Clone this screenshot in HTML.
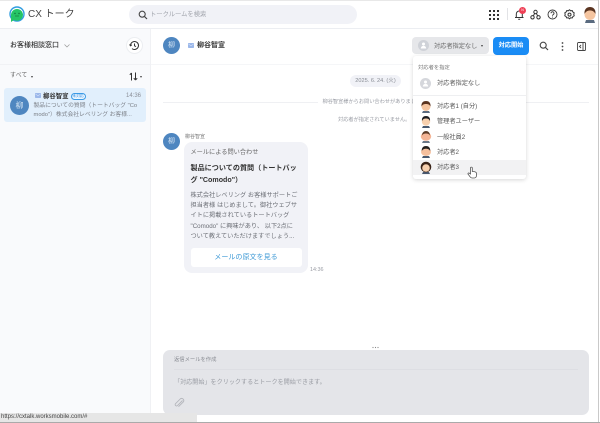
<!DOCTYPE html>
<html lang="ja"><head><meta charset="utf-8"><style>
*{box-sizing:border-box}
html,body{margin:0;padding:0;background:#fff}
body{width:600px;height:423px;overflow:hidden;position:relative;font-family:"Liberation Sans","Noto Sans CJK JP",sans-serif;color:#333}
#r{position:absolute;left:0;top:0;width:600px;height:423px;filter:blur(.35px);overflow:hidden}
.a{position:absolute;white-space:nowrap}
.av{position:absolute;border-radius:50%;background:#4e86c0;color:#cfe0f0;text-align:center}
svg{position:absolute;overflow:visible}
</style></head><body><div id="r">
<div class="a" style="left:0;top:0;width:600px;height:1px;background:#e8e8e8"></div>
<div class="a" style="left:0;top:28px;width:598px;height:1px;background:#eceef2"></div>
<div class="a" style="left:0;top:29px;width:151px;height:394px;background:#f9fafc"></div>
<div class="a" style="left:150px;top:29px;width:1px;height:394px;background:#f0f1f4"></div>
<div class="a" style="left:0;top:64px;width:150px;height:1px;background:#f1f2f5"></div>
<div class="a" style="left:151px;top:64px;width:447px;height:1px;background:#f5f6f8"></div>

<svg style="left:9px;top:7px" width="16" height="16" viewBox="0 0 16 16"><circle cx="8" cy="7" r="7" fill="none" stroke="#2f9ce0" stroke-width="1.4"/><path d="M2 8a6 6 0 1 1 12 0a6 6 0 0 1-9 5l-3 2z" fill="#25c566"/><circle cx="6" cy="6.5" r=".7" fill="#11703a"/><circle cx="10" cy="6.5" r=".7" fill="#11703a"/><path d="M6 9h4" stroke="#11703a" stroke-width=".6"/></svg>
<div class="a" style="left:28px;top:6.500px;font-size:10px;line-height:16px;color:#444">CX トーク</div>

<div class="a" style="left:129px;top:5px;width:228px;height:19px;border-radius:10px;background:#f1f2f7"></div>
<svg style="left:138px;top:10px" width="10" height="10" viewBox="0 0 10 10"><circle cx="4.2" cy="4.2" r="3" fill="none" stroke="#444" stroke-width="1.1"/><path d="M6.5 6.5L9 9" stroke="#444" stroke-width="1.2"/></svg>
<div class="a" style="left:150px;top:9px;font-size:6.300px;line-height:11px;color:#a2a5ad">トークルームを検索</div>

<svg style="left:489px;top:9px" width="11" height="11" viewBox="0 0 11 11" fill="#333"><rect x="0" y="1" width="2" height="2"/><rect x="4" y="1" width="2" height="2"/><rect x="8" y="1" width="2" height="2"/><rect x="0" y="5" width="2" height="2"/><rect x="4" y="5" width="2" height="2"/><rect x="8" y="5" width="2" height="2"/><rect x="0" y="9" width="2" height="2"/><rect x="4" y="9" width="2" height="2"/><rect x="8" y="9" width="2" height="2"/></svg>
<div class="a" style="left:507px;top:8px;width:1px;height:12px;background:#e2e3e6"></div>
<svg style="left:514px;top:9px" width="11" height="11" viewBox="0 0 11 11" fill="none" stroke="#333" stroke-width="1"><path d="M1 8.5h8.5M2.3 8.5V5a3 3 0 0 1 6 0v3.5M4.2 10.3h2"/></svg>
<div class="a" style="left:519px;top:7px;width:7px;height:7px;border-radius:50%;background:#ee3f55;color:#fff;font-size:3.5px;line-height:7px;text-align:center">N</div>
<svg style="left:530px;top:9px" width="11" height="11" viewBox="0 0 11 11" fill="none" stroke="#333" stroke-width="1"><circle cx="5.5" cy="3" r="1.7"/><circle cx="2.5" cy="8.3" r="1.7"/><circle cx="8.5" cy="8.3" r="1.7"/><path d="M4.6 4.5L3.4 6.8M6.4 4.5L7.6 6.8"/></svg>
<svg style="left:547px;top:8.500px" width="11" height="11" viewBox="0 0 11 11" fill="none" stroke="#333" stroke-width=".9"><circle cx="5.5" cy="5.500" r="4.500"/><path d="M4 4.300a1.500 1.500 0 1 1 2.200 1.300c-.5.300-.7.600-.7 1.100"/><path d="M5.500 7.600v.9"/></svg>
<svg style="left:564px;top:8.500px" width="11" height="11" viewBox="0 0 11 11" fill="none" stroke="#333" stroke-width="1"><path d="M5.500.8l1.200 1 1.500-.2.700 1.400 1.300.8-.4 1.500.4 1.500-1.300.8-.7 1.400-1.500-.2-1.200 1-1.200-1-1.500.2-.7-1.400-1.300-.8.4-1.500-.4-1.500 1.300-.8.7-1.400 1.500.2z"/><circle cx="5.500" cy="5.600" r="1.500"/></svg>
<svg style="left:583px;top:6px" width="14" height="17" viewBox="0 0 14 17"><path d="M2 17l1-3h8l1 3z" fill="#5a6b80"/><ellipse cx="7" cy="8.500" rx="5.500" ry="5.500" fill="#f5c5a0"/><path d="M1.500 8C1 3 4 1 7 1s6 2 5.500 7C11 5 9 4.500 7 4.500S3 5 1.500 8z" fill="#5a3420"/></svg>

<div class="a" style="left:10px;top:40px;font-size:7px;line-height:12px;color:#333;font-weight:500">お客様相談窓口</div>
<svg style="left:64px;top:44px" width="6" height="4" viewBox="0 0 6 4"><path d="M.5.500L3 3 5.500.500" fill="none" stroke="#999" stroke-width=".7"/></svg>
<div class="a" style="left:126px;top:37px;width:17px;height:17px;border-radius:50%;background:#fff;border:1px solid #eceef1"></div>
<svg style="left:129px;top:40px" width="11" height="11" viewBox="0 0 11 11" fill="none" stroke="#333" stroke-width="1"><path d="M1.500 5.500a4 4 0 1 1 1.500 3.100M.5 4.500l1 1.300 1.300-1M5.500 3.500v2.300l1.500.8"/></svg>

<div class="a" style="left:10px;top:71px;font-size:6px;line-height:11px;color:#666">すべて</div>
<div class="a" style="left:31px;top:76px;width:0;height:0;border-left:1.500px solid transparent;border-right:1.500px solid transparent;border-top:2px solid #444"></div>
<svg style="left:129px;top:72px" width="9" height="9" viewBox="0 0 9 9" fill="none" stroke="#333" stroke-width="1"><path d="M2.500 8.500V1M.8 2.800L2.500 1M6.500.5V8M4.800 6.200L6.500 8M8.200 6.200L6.500 8"/></svg>
<div class="a" style="left:140px;top:76px;width:0;height:0;border-left:1.500px solid transparent;border-right:1.500px solid transparent;border-top:2px solid #444"></div>

<div class="a" style="left:4px;top:88px;width:142px;height:34px;border-radius:3px;background:#e1effc"></div>
<div class="av" style="left:10px;top:96px;width:19px;height:19px;font-size:8px;line-height:19px">柳</div>
<svg style="left:34.500px;top:93px" width="6" height="5" viewBox="0 0 6 5"><rect width="6" height="5" rx=".7" fill="#9cb8ea"/><path d="M.5 1L3 2.800 5.500 1" fill="none" stroke="#e8f0ff" stroke-width=".5"/></svg>
<div class="a" style="left:43px;top:91px;font-size:6.400px;line-height:11px;font-weight:700;color:#333">柳谷智宣</div>
<div class="a" style="left:70.500px;top:93px;width:15px;height:7px;border-radius:4px;border:.7px solid #3b9be6;color:#2a8ae0;background:#eef7ff;font-size:3.800px;line-height:5.600px;text-align:center">未対応</div>
<div class="a" style="left:126px;top:92px;font-size:6px;line-height:9px;color:#8b8f98">14:36</div>
<div class="a" style="left:33.500px;top:101.500px;font-size:5.800px;line-height:9.500px;color:#7d8188;width:108px;white-space:normal;word-break:break-all">製品についての質問（トートバッグ "Co<br>modo"）株式会社レベリング お客様...</div>

<div class="av" style="left:163px;top:37px;width:17px;height:17px;font-size:7px;line-height:17px">柳</div>
<svg style="left:188px;top:43px" width="6" height="5" viewBox="0 0 6 5"><rect width="6" height="5" rx=".7" fill="#9cb8ea"/><path d="M.5 1L3 2.800 5.500 1" fill="none" stroke="#e8f0ff" stroke-width=".5"/></svg>
<div class="a" style="left:197px;top:39.500px;font-size:7px;line-height:12px;font-weight:700;color:#333">柳谷智宣</div>

<div class="a" style="left:412px;top:37px;width:77px;height:17px;border-radius:4px;background:#e6e7ea"></div>
<div class="a" style="left:418px;top:40px;width:11px;height:11px;border-radius:50%;background:#cfd2d8"></div>
<svg style="left:420px;top:42px" width="7" height="7" viewBox="0 0 7 7" fill="#fff"><circle cx="3.500" cy="2" r="1.500"/><path d="M.8 6.500a2.700 2.700 0 0 1 5.400 0z"/></svg>
<div class="a" style="left:434px;top:40.500px;font-size:6.200px;line-height:11px;color:#666">対応者指定なし</div>
<div class="a" style="left:480.500px;top:45px;width:0;height:0;border-left:1.500px solid transparent;border-right:1.500px solid transparent;border-top:2px solid #444"></div>
<div class="a" style="left:493px;top:37px;width:36px;height:18px;border-radius:4px;background:#1a8cf5;color:#fff;font-size:6.200px;line-height:18px;text-align:center;font-weight:700">対応開始</div>
<svg style="left:539px;top:41px" width="10" height="10" viewBox="0 0 10 10"><circle cx="4.200" cy="4.200" r="3" fill="none" stroke="#444" stroke-width="1.100"/><path d="M6.500 6.500L9 9" stroke="#444" stroke-width="1.200"/></svg>
<svg style="left:561px;top:41.500px" width="3" height="9" viewBox="0 0 3 9" fill="#444"><circle cx="1.500" cy="1" r=".9"/><circle cx="1.500" cy="4.500" r=".9"/><circle cx="1.500" cy="8" r=".9"/></svg>
<svg style="left:577px;top:41.500px" width="9" height="9" viewBox="0 0 9 9" fill="none" stroke="#444" stroke-width=".9"><rect x=".5" y=".5" width="8" height="8" rx="1"/><path d="M6 .5v8M4 3l-1.500 1.500L4 6"/></svg>

<div class="a" style="left:350px;top:75px;width:51px;height:12px;border-radius:6px;background:#f1f2f7;color:#888c94;font-size:5.600px;line-height:12px;text-align:center">2025. 6. 24. (火)</div>
<div class="a" style="left:163px;top:102px;width:155px;height:1px;background:#eff0f3"></div>
<div class="a" style="left:484px;top:102px;width:105px;height:1px;background:#eff0f3"></div>
<div class="a" style="left:322.500px;top:98px;font-size:5.200px;line-height:9px;color:#9a9da5">柳谷智宣様からお問い合わせがありました。</div>
<div class="a" style="left:338px;top:116px;font-size:5.200px;line-height:9px;color:#9a9da5">対応者が指定されていません。</div>

<div class="av" style="left:163px;top:133px;width:17px;height:17px;font-size:7px;line-height:17px">柳</div>
<div class="a" style="left:185px;top:132.500px;font-size:5px;line-height:8px;color:#777">柳谷智宣</div>
<div class="a" style="left:184px;top:142px;width:124px;height:131px;border-radius:8px;background:#f1f2f7"></div>
<div class="a" style="left:190.500px;top:146.500px;font-size:6.200px;line-height:11px;color:#666">メールによる問い合わせ</div>
<div class="a" style="left:190.500px;top:162px;font-size:7.100px;line-height:12px;color:#333;font-weight:700">製品についての質問（トートバッ<br>グ "Comodo"）</div>
<div class="a" style="left:190.500px;top:191px;font-size:6.200px;line-height:10.200px;color:#6d7077">株式会社レベリング お客様サポートご<br>担当者様 はじめまして。御社ウェブサ<br>イトに掲載されているトートバッグ<br>"Comodo" に興味があり、 以下2点に<br>ついて教えていただけますでしょう...</div>
<div class="a" style="left:190.500px;top:247.500px;width:111px;height:19px;border-radius:3px;background:#fff;color:#3f9ad6;font-size:7.050px;line-height:19px;text-align:center">メールの原文を見る</div>
<div class="a" style="left:310px;top:266px;font-size:5.400px;line-height:8px;color:#9a9da5">14:36</div>

<svg style="left:372px;top:345.500px" width="8" height="3" viewBox="0 0 8 3" fill="#888"><circle cx="1" cy="1.500" r=".6"/><circle cx="3.500" cy="1.500" r=".6"/><circle cx="6" cy="1.500" r=".6"/></svg>
<div class="a" style="left:163px;top:350px;width:426px;height:65px;border-radius:7px;background:#e4e5e9"></div>
<div class="a" style="left:174px;top:356px;font-size:5.300px;line-height:9px;color:#8a8d94">返信メールを作成</div>
<div class="a" style="left:174px;top:369px;width:404px;height:1px;background:#dddee3"></div>
<div class="a" style="left:174px;top:377px;font-size:6.100px;line-height:11px;color:#999ca3">「対応開始」をクリックするとトークを開始できます。</div>
<svg style="left:174px;top:398px" width="10" height="10" viewBox="0 0 10 10" fill="none" stroke="#b4b6bc" stroke-width=".9"><path d="M8.500 2.500L3.500 7.500a1.300 1.300 0 0 1-2-1.800l5-5a2.200 2.200 0 0 1 3 3l-5 5"/></svg>

<div class="a" style="left:598px;top:0;width:1px;height:423px;background:#c9c9c9"></div>
<div class="a" style="left:599px;top:0;width:1px;height:423px;background:#fff"></div>
<div class="a" style="left:0;top:421.500px;width:600px;height:1px;background:#aaa"></div>
<div class="a" style="left:0;top:413px;width:197px;height:9px;background:#e6e6e6;font-size:6px;line-height:9px;color:#444;padding-left:1px">https://cxtalk.worksmobile.com/#</div>

<div class="a" style="left:413px;top:56px;width:113px;height:123px;border-radius:3px;background:#fff;box-shadow:0 1px 4px rgba(0,0,0,.16)"></div>
<div class="a" style="left:418px;top:64px;font-size:5.300px;line-height:9px;color:#777">対応者を指定</div>
<div class="a" style="left:420px;top:78px;width:11px;height:11px;border-radius:50%;background:#d5d7dc"></div>
<svg style="left:422px;top:80px" width="7" height="7" viewBox="0 0 7 7" fill="#fff"><circle cx="3.500" cy="2" r="1.500"/><path d="M.8 6.500a2.700 2.700 0 0 1 5.400 0z"/></svg>
<div class="a" style="left:437px;top:78px;font-size:6.200px;line-height:11px;color:#555">対応者指定なし</div>
<div class="a" style="left:413px;top:95px;width:113px;height:1px;background:#eeeff1"></div>
<div class="a" style="left:413px;top:160px;width:113px;height:15px;background:#f2f2f3"></div>
<div class="a" style="left:437px;top:101px;font-size:6.200px;line-height:11px;color:#555">対応者1 (自分)</div>
<div class="a" style="left:437px;top:116px;font-size:6.200px;line-height:11px;color:#555">管理者ユーザー</div>
<div class="a" style="left:437px;top:131.500px;font-size:6.200px;line-height:11px;color:#555">一般社員2</div>
<div class="a" style="left:437px;top:146.500px;font-size:6.200px;line-height:11px;color:#555">対応者2</div>
<div class="a" style="left:437px;top:162px;font-size:6.200px;line-height:11px;color:#555">対応者3</div>

<svg style="left:420px;top:100px" width="12" height="13" viewBox="0 0 12 13"><path d="M2 13l1-2h6l1 2z" fill="#5a6b80"/><circle cx="6" cy="6.500" r="4.500" fill="#f5c5a0"/><path d="M1.500 6.500C1 2.500 3.500 1 6 1s5 1.500 4.500 5.500C9.500 4.500 8 4 6 4S2.500 4.500 1.500 6.500z" fill="#5a3420"/></svg>
<svg style="left:420px;top:115px" width="12" height="13" viewBox="0 0 12 13"><path d="M2 13l1-2h6l1 2z" fill="#4a5a70"/><circle cx="6" cy="6.500" r="4.200" fill="#f7d0ae"/><path d="M2 6C1.500 2.500 3.500 1 6 1s4.500 1.500 4 5C9 4 8 3.500 6 3.500S3 4 2 6z" fill="#1c1c20"/></svg>
<svg style="left:420px;top:130px" width="12" height="13" viewBox="0 0 12 13"><path d="M2 13l1-2h6l1 2z" fill="#6a7888"/><ellipse cx="6" cy="6.500" rx="5.200" ry="4.300" fill="#f4b596"/><path d="M2 5.500C2 2.500 4 1 6 1s4 1.500 4 4.500C9 4 8 3.500 6 3.500S3 4 2 5.500z" fill="#5d3c28"/></svg>
<svg style="left:420px;top:145px" width="12" height="13" viewBox="0 0 12 13"><path d="M2 13l1-2h6l1 2z" fill="#4a5a70"/><ellipse cx="6" cy="6.800" rx="5" ry="4.200" fill="#f5c09e"/><path d="M1.800 6C1.500 2.500 3.500 1 6 1s4.500 1.500 4.200 5C9 4.200 8 3.700 6 3.700S3 4.200 1.800 6z" fill="#24201e"/></svg>
<svg style="left:420px;top:161px" width="12" height="13" viewBox="0 0 12 13"><path d="M2 13l1-2h6l1 2z" fill="#4a5a70"/><circle cx="6" cy="6" r="5.300" fill="#3a2418"/><ellipse cx="6" cy="7" rx="3.800" ry="3.700" fill="#f7d0ae"/></svg>

<svg style="left:467px;top:166px" width="11" height="13" viewBox="0 0 11 13"><path d="M3.500 8V2a.9.9 0 0 1 1.800 0v3.500h1.100c.8 0 2.800.5 3 1.500v3c0 1-1 2-2 2H5c-1 0-1.500-.6-2-1.300L1 8c-.4-.8.700-1.400 1.300-.8z" fill="#fff" stroke="#555" stroke-width=".8"/></svg>
</div></body></html>
